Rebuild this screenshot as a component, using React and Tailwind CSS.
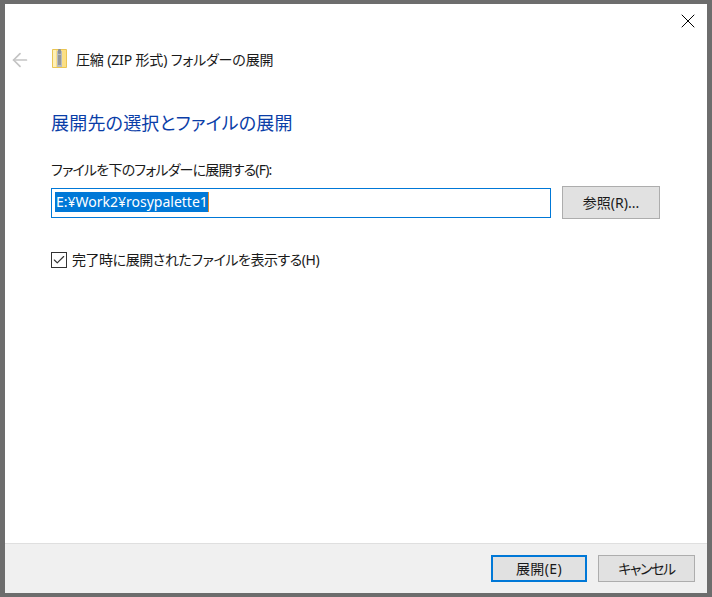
import { ArrowLeft, X, Check } from 'lucide-react'

function ZipFolderIcon() {
  return (
    <svg width="15" height="19" viewBox="0 0 15 19" className="shrink-0">
      <path d="M0.5 0.5H14.5V18.5H0.5Z" fill="#fbdf85" stroke="#eac552" />
      <rect x="1" y="1" width="3" height="17" fill="#fff0b8" />
      <rect x="5" y="2" width="5" height="16" fill="#b9bcc0" />
      <rect x="6" y="0" width="3" height="5" rx="1" fill="#8d9094" />
      <path d="M6 7H9M6 9H9M6 11H9M6 13H9M6 15H9" stroke="#6f7276" strokeWidth="1" />
    </svg>
  )
}

export default function App() {
  return (
    <div className="w-[712px] h-[597px] bg-[#6d6d6d] pt-1 pl-[5px] pr-[5px] pb-1 font-['Noto_Sans','Noto_Sans_CJK_JP',sans-serif] [font-feature-settings:'palt'] text-[#1a1a1a]">
      <div className="w-full h-full bg-white flex flex-col">
        <div className="flex justify-end h-[34px] pr-[7px] pt-[5px]">
          <X size={24} strokeWidth={1} className="text-black" />
        </div>

        <div className="flex items-center h-[44px] pl-[4px]">
          <ArrowLeft size={22} strokeWidth={1.9} className="text-[#c4c4c4]" />
          <div className="ml-[21px] mr-[9px] -mt-[3px]">
            <ZipFolderIcon />
          </div>
          <span className="text-[14px] leading-[20px] tracking-[-0.15px]">圧縮 (ZIP 形式) フォルダーの展開</span>
        </div>

        <div className="flex-1 pl-[46px] pr-[47px]">
          <h1 className="mt-[28px] text-[18px] leading-[26px] font-normal text-[#0a3ea8] tracking-[0.2px]">展開先の選択とファイルの展開</h1>

          <p className="mt-[24px] text-[14px] leading-[20px] tracking-[-0.8px]">ファイルを下のフォルダーに展開する(F):</p>

          <div className="mt-[6px] flex items-center gap-[11px]">
            <div className="w-[500px] h-[30px] border border-[#0078d7] px-[3px] pb-[1px] flex items-center">
              <span className="bg-[#0078d7] text-white text-[14px] leading-[20px] pl-[1px] border-r border-[#e08a30]">E:¥Work2¥rosypalette1</span>
            </div>
            <button className="w-[98px] h-[33px] bg-[#e1e1e1] border border-[#adadad] text-[14px]">参照(R)...</button>
          </div>

          <label className="mt-[31px] flex items-center gap-[5px]">
            <span className="w-[16px] h-[16px] border border-[#333] flex items-center justify-center">
              <Check size={14} strokeWidth={2} className="text-[#333]" />
            </span>
            <span className="text-[14px] leading-[20px] tracking-[-0.45px]">完了時に展開されたファイルを表示する(H)</span>
          </label>
        </div>

        <div className="h-[50px] bg-[#f0f0f0] border-t border-[#dfdfdf] flex justify-end items-start pt-[11px] pr-[12px] gap-[11px]">
          <button className="w-[96px] h-[27px] bg-[#e1e1e1] border-2 border-[#0078d7] text-[14px] tracking-[0.4px]">展開(E)</button>
          <button className="w-[97px] h-[27px] bg-[#e1e1e1] border border-[#adadad] text-[14px] tracking-[-1.4px]">キャンセル</button>
        </div>
      </div>
    </div>
  )
}
